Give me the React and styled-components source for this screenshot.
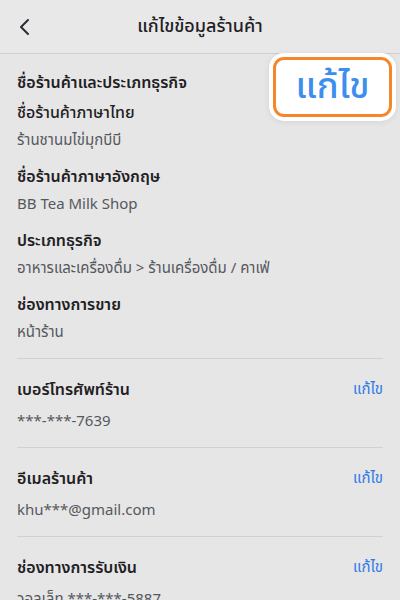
import React from "react";
import styled, { createGlobalStyle } from "styled-components";

const Global = createGlobalStyle`
  html, body { margin: 0; padding: 0; background: #e6e6e6; }
  body { font-family: "Noto Sans Thai", "Noto Sans", "Liberation Sans", sans-serif; }
`;

const Page = styled.div`
  position: relative;
  width: 400px;
  height: 600px;
  overflow: hidden;
  background: #e6e6e6;
  color: #1f2024;
`;

const Header = styled.header`
  height: 53px;
  display: grid;
  grid-template-columns: 56px 1fr 56px;
  align-items: center;
  border-bottom: 1px solid #cfcfcf;
  background: #e8e8e8;
`;

const BackBtn = styled.button`
  border: 0;
  background: none;
  padding: 0 0 0 18px;
  height: 100%;
  display: flex;
  align-items: center;
  cursor: pointer;
`;

const Title = styled.h1`
  margin: 0;
  text-align: center;
  font-size: 18px;
  font-weight: 500;
  color: #1f2024;
  line-height: 26px;
`;

const Body = styled.main`
  padding: 0 17px;
`;

const Section = styled.section`
  padding: ${(p) => p.$pad || "16px 0 12px"};
  border-bottom: ${(p) => (p.$last ? "none" : "1px solid #d0d0d0")};
  display: flex;
  flex-direction: column;
  gap: ${(p) => p.$gap || "10px"};
`;

const Group = styled.div`
  display: flex;
  flex-direction: column;
  gap: ${(p) => p.$gap || "2px"};
`;

const RowHead = styled.div`
  display: flex;
  justify-content: space-between;
  align-items: center;
`;

const Label = styled.div`
  font-size: 16px;
  line-height: 26px;
  font-weight: 600;
  color: #1f2024;
`;

const SubLabel = styled.div`
  font-size: 16px;
  line-height: 26px;
  font-weight: 500;
  color: #1f2024;
`;

const Value = styled.div`
  font-size: 15px;
  line-height: 26px;
  color: #55585e;
`;

const EditLink = styled.a`
  font-size: 15px;
  line-height: 24px;
  color: #2f7ae5;
  text-decoration: none;
`;

const Callout = styled.div`
  position: absolute;
  left: 273px;
  top: 57px;
  width: 119px;
  height: 60px;
  box-sizing: border-box;
  border: 3px solid #f5862a;
  border-radius: 11px;
  background: #fff;
  box-shadow: 0 0 0 4px #fff, 0 1px 6px 4px rgba(0, 0, 0, 0.08);
  display: flex;
  align-items: center;
  justify-content: center;
  font-size: 36px;
  font-weight: 500;
  color: #3e8ef0;
  line-height: 1;
`;

function Chevron() {
  return (
    <svg width="16" height="20" viewBox="0 0 16 20" fill="none">
      <path d="M10 3 L3 10 L10 17" stroke="#2a2d33" strokeWidth="2" strokeLinecap="round" strokeLinejoin="round" />
    </svg>
  );
}

const contacts = [
  { label: "เบอร์โทรศัพท์ร้าน", value: "***-***-7639" },
  { label: "อีเมลร้านค้า", value: "khu***@gmail.com" },
  { label: "ช่องทางการรับเงิน", value: "วอลเล็ท ***-***-5887" },
];

export default function App() {
  return (
    <Page>
      <Global />
      <Header>
        <BackBtn aria-label="back">
          <Chevron />
        </BackBtn>
        <Title>แก้ไขข้อมูลร้านค้า</Title>
        <span />
      </Header>
      <Body>
        <Section>
          <Group $gap="4px">
            <Label>ชื่อร้านค้าและประเภทธุรกิจ</Label>
            <Group>
              <SubLabel>ชื่อร้านค้าภาษาไทย</SubLabel>
              <Value>ร้านชานมไข่มุกบีบี</Value>
            </Group>
          </Group>
          <Group>
            <Label>ชื่อร้านค้าภาษาอังกฤษ</Label>
            <Value>BB Tea Milk Shop</Value>
          </Group>
          <Group>
            <Label>ประเภทธุรกิจ</Label>
            <Value>อาหารและเครื่องดื่ม &gt; ร้านเครื่องดื่ม / คาเฟ่</Value>
          </Group>
          <Group>
            <Label>ช่องทางการขาย</Label>
            <Value>หน้าร้าน</Value>
          </Group>
        </Section>
        {contacts.map((c, i) => (
          <Section key={c.label} $pad="18px 0 12px" $gap="6px" $last={i === contacts.length - 1}>
            <RowHead>
              <Label>{c.label}</Label>
              <EditLink href="#">แก้ไข</EditLink>
            </RowHead>
            <Value>{c.value}</Value>
          </Section>
        ))}
      </Body>
      <Callout>แก้ไข</Callout>
    </Page>
  );
}
